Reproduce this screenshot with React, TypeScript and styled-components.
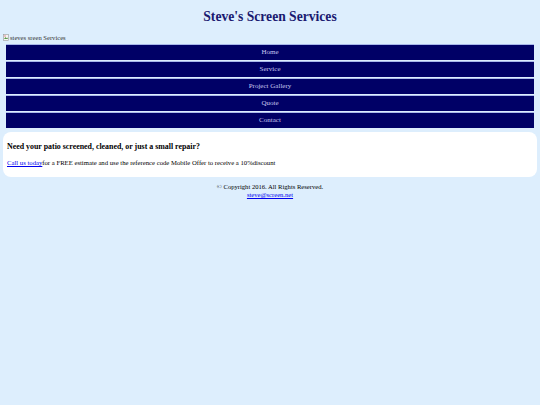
import styled, { createGlobalStyle } from "styled-components";

const GlobalStyle = createGlobalStyle`
  html, body {
    margin: 0;
    padding: 0;
    background: #ddeefd;
    font-family: "Liberation Serif", "Times New Roman", serif;
  }
`;

const links = ["Home", "Service", "Project Gallery", "Quote", "Contact"];

const App = () => {
  return (
    <Page>
      <GlobalStyle />
      <Title>Steve's Screen Services</Title>
      <Broken>
        <svg width="6" height="7" viewBox="0 0 6 7">
          <rect x="0.5" y="0.5" width="5" height="6" fill="#f4f4f4" stroke="#9a9a9a" strokeWidth="0.6" />
          <path d="M1 5 L2.5 3 L3.5 4.2 L4.3 3.4 L5 5 Z" fill="#5c9a4a" />
          <circle cx="2" cy="2" r="0.7" fill="#d66" />
        </svg>
        steves sreen Services
      </Broken>
      <Nav>
        {links.map((l) => (
          <NavItem key={l}>
            <NavLink href="#">{l}</NavLink>
          </NavItem>
        ))}
      </Nav>
      <Card>
        <CardTitle>Need your patio screened, cleaned, or just a small repair?</CardTitle>
        <CardText>
          <a href="#">Call us today</a>for a FREE estimate and use the reference code Mobile Offer to receive a 10%discount
        </CardText>
      </Card>
      <Footer>
        © Copyright 2016. All Rights Reserved.
        <br />
        <a href="#">steve@screen.net</a>
      </Footer>
    </Page>
  );
};

const Page = styled.div`
  padding: 0 3px;
`;

const Title = styled.h1`
  margin: 0;
  padding-top: 9px;
  height: 23px;
  text-align: center;
  font-size: 13.6px;
  font-weight: bold;
  color: #1a1a70;
`;

const Broken = styled.div`
  display: flex;
  align-items: center;
  gap: 1px;
  height: 11px;
  padding-bottom: 1px;
  font-size: 6.6px;
  color: #333;
`;

const Nav = styled.ul`
  list-style: none;
  margin: 0;
  padding: 0 3px;
  display: flex;
  flex-direction: column;
`;

const NavItem = styled.li`
  border-top: 1px solid #a9b8ea;
  padding-bottom: 1px;
`;

const NavLink = styled.a`
  display: block;
  height: 15px;
  line-height: 15px;
  background: #000066;
  color: #c8c8f0;
  text-align: center;
  font-size: 7px;
  text-decoration: none;
`;

const Card = styled.div`
  margin-top: 3px;
  background: #ffffff;
  border-radius: 8px;
  padding: 10px 4px 10px;
`;

const CardTitle = styled.h2`
  margin: 0 0 8px;
  font-size: 7.9px;
  line-height: 9px;
  font-weight: bold;
  color: #000;
`;

const CardText = styled.p`
  margin: 0;
  font-size: 6.7px;
  line-height: 8px;
  color: #000;

  a {
    color: #0000ee;
  }
`;

const Footer = styled.div`
  margin-top: 6px;
  text-align: center;
  font-size: 6.6px;
  line-height: 8px;
  color: #000;

  a {
    color: #0000ee;
  }
`;

export default App;
